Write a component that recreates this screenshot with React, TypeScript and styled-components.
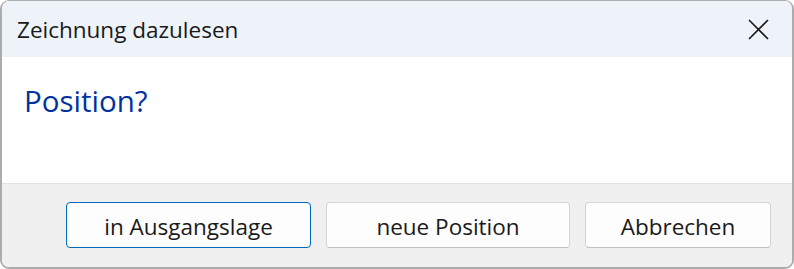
import React from 'react';
import styled, { createGlobalStyle } from 'styled-components';

const GlobalStyle = createGlobalStyle`
  html, body {
    margin: 0;
    padding: 0;
    background: #ffffff;
  }
  body {
    font-family: "Open Sans", "Noto Sans", sans-serif;
  }
`;

const Window = styled.div`
  box-sizing: border-box;
  width: 794px;
  height: 269px;
  display: flex;
  flex-direction: column;
  border: 2px solid #acacac;
  border-top-width: 1px;
  border-radius: 9px;
  overflow: hidden;
  background: #ffffff;
`;

const TitleBar = styled.div`
  height: 56px;
  flex: none;
  display: flex;
  align-items: center;
  justify-content: space-between;
  padding: 1px 23px 0 15px;
  box-sizing: border-box;
  background: #eef3fa;
`;

const Caption = styled.span`
  font-size: 22.5px;
  color: #1a1a1a;
`;

const CloseButton = styled.button`
  border: none;
  background: transparent;
  padding: 0;
  width: 22px;
  height: 22px;
  display: flex;
  align-items: center;
  justify-content: center;
  cursor: pointer;
`;

const Content = styled.div`
  flex: 1;
  padding: 24px 22px 0;
`;

const Instruction = styled.div`
  font-size: 29.5px;
  color: #0033a0;
  line-height: 40px;
`;

const Footer = styled.div`
  flex: none;
  height: 84px;
  box-sizing: border-box;
  display: flex;
  justify-content: flex-end;
  align-items: flex-start;
  gap: 15px;
  padding: 18px 21px 0;
  background: #f0f0f0;
  border-top: 1px solid #e2e2e2;
`;

const Button = styled.button<{ $primary?: boolean; $width: number }>`
  box-sizing: border-box;
  width: ${p => p.$width}px;
  height: 46px;
  padding: 2px 0 0;
  border-radius: 4px;
  border: 1px solid ${p => (p.$primary ? '#0067c0' : '#d4d4d4')};
  border-bottom-color: ${p => (p.$primary ? '#0067c0' : '#c2c2c2')};
  background: #fdfdfd;
  font-family: "Open Sans", "Noto Sans", sans-serif;
  font-size: 22.5px;
  color: #1a1a1a;
  cursor: pointer;
`;

const CloseIcon = () => (
  <svg width="21" height="21" viewBox="0 0 21 21">
    <path d="M1 1 L20 20 M20 1 L1 20" stroke="#1a1a1a" strokeWidth="1.6" fill="none" />
  </svg>
);

const App: React.FC = () => (
  <>
    <GlobalStyle />
    <Window>
      <TitleBar>
        <Caption>Zeichnung dazulesen</Caption>
        <CloseButton aria-label="Schließen">
          <CloseIcon />
        </CloseButton>
      </TitleBar>
      <Content>
        <Instruction>Position?</Instruction>
      </Content>
      <Footer>
        <Button $primary $width={245}>in Ausgangslage</Button>
        <Button $width={244}>neue Position</Button>
        <Button $width={186}>Abbrechen</Button>
      </Footer>
    </Window>
  </>
);

export default App;
